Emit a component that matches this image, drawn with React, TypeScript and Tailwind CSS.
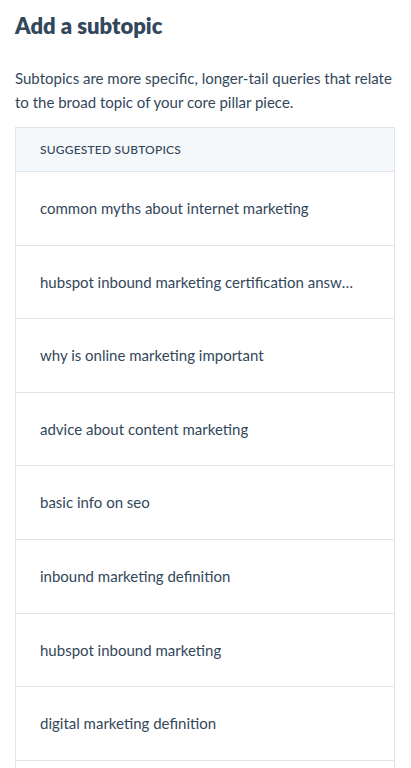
const subtopics = [
  "common myths about internet marketing",
  "hubspot inbound marketing certification answers",
  "why is online marketing important",
  "advice about content marketing",
  "basic info on seo",
  "inbound marketing definition",
  "hubspot inbound marketing",
  "digital marketing definition",
];

export default function App() {
  return (
    <div className="h-[768px] overflow-hidden bg-white px-[15px] pt-[13px] text-[#33475b] font-['Lato',sans-serif]">
      <h1 className="text-[22px] font-extrabold leading-[26px]">Add a subtopic</h1>
      <p className="mt-[27px] text-[15px] leading-[24px]">
        Subtopics are more specific, longer-tail queries that relate to the broad topic of your core pillar piece.
      </p>
      <div className="mt-[13px] w-[380px] border border-[#dfe3eb]">
        <div className="flex h-[44px] items-center border-b border-[#dfe3eb] bg-[#f5f8fa] px-[24px] text-[12px] font-medium tracking-[0.2px]">
          SUGGESTED SUBTOPICS
        </div>
        {subtopics.map((t) => (
          <div
            key={t}
            className="flex h-[73.6px] items-center border-b border-[#dfe3eb] pl-[24px] pr-[38px] text-[15px]"
          >
            <span className="truncate">{t}</span>
          </div>
        ))}
        <div className="h-[73.6px]" />
      </div>
    </div>
  );
}
